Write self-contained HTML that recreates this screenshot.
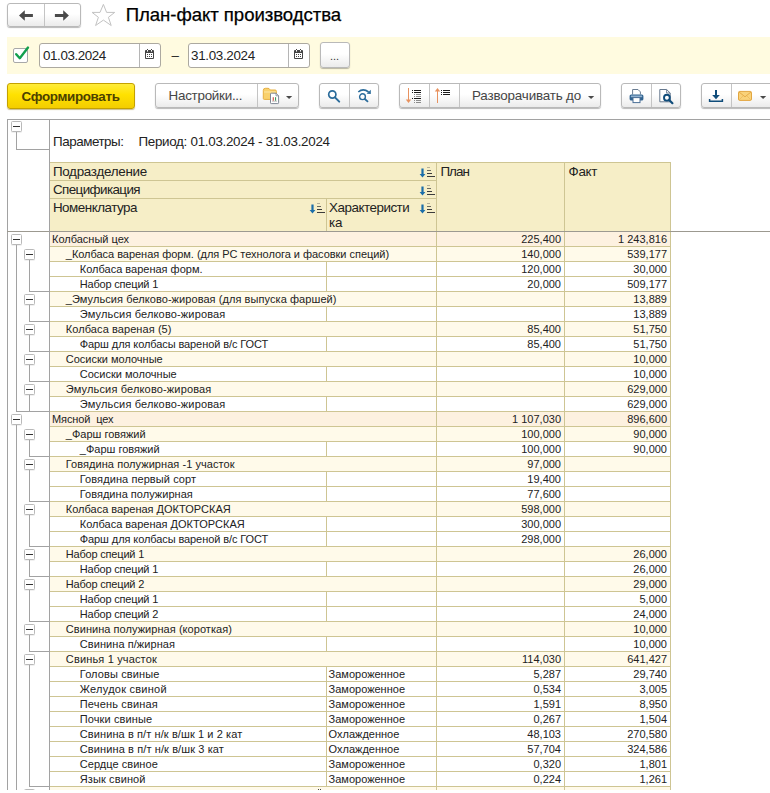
<!DOCTYPE html>
<html lang="ru"><head><meta charset="utf-8"><title>План-факт производства</title>
<style>
*{box-sizing:border-box;margin:0;padding:0}
html,body{width:770px;height:793px;overflow:hidden;background:#fff}
body{position:relative;font-family:"Liberation Sans",sans-serif;font-size:13px;color:#333}
.abs,.abs *{position:absolute}
.a{position:absolute}
.btn{position:absolute;border:1px solid #b9b9b9;border-radius:3px;background:linear-gradient(#ffffff 0%,#ffffff 45%,#ebebeb 100%);box-shadow:0 1px 1px rgba(0,0,0,.28)}
.sep{position:absolute;top:0;bottom:0;width:1px;background:#c4c4c4}
.inp{position:absolute;border:1px solid #aca9a0;border-radius:3px;background:#fff}
.t{position:absolute;white-space:pre;line-height:1}
.row{position:absolute;left:50px;width:621px;height:15px;font-size:11px;color:#222}
.row .c{position:absolute;top:0;height:16px;border-top:1px solid #cec593;border-bottom:1px solid #cec593;border-right:1px solid #cec593;white-space:pre;line-height:13px;padding-top:1px;overflow:hidden}
.l1 .c{background:#fdf1e0}
.l2 .c{background:#fffaea}
.l3 .c{background:#fff}
.num{text-align:right;padding-right:3px}
.box{position:absolute;width:11px;height:11px;border:1px solid #b9b9b9;border-radius:1.5px;background:#fff;box-shadow:0 1px 0 rgba(0,0,0,.06)}
.box i{position:absolute;left:1px;top:4px;width:7px;height:1px;background:#333}
.ln{position:absolute;background:#a2a2a2}
.hd{position:absolute;background:#f6eec7;border:1px solid #cec593;font-size:13px;color:#222;white-space:pre;line-height:15px;overflow:hidden}
</style></head><body>

<!-- navigation -->
<div class="btn" style="left:7px;top:3px;width:74px;height:24px"><div class="sep" style="left:36px"></div>
<svg class="a" style="left:0;top:0" width="72" height="22" viewBox="0 0 72 22"><g fill="#4a4a4a"><path d="M11 11.5 L16.8 6.2 L16.8 10 L24.9 10 L24.9 13 L16.8 13 L16.8 16.8 Z"/><path d="M60.9 11.5 L55.2 6.2 L55.2 10 L46.9 10 L46.9 13 L55.2 13 L55.2 16.8 Z"/></g></svg></div>
<svg class="a" style="left:91px;top:3px" width="25" height="25" viewBox="0 0 25 25"><path d="M12.4 1.4 L15.6 9.4 L23.7 9.4 L17.4 14.3 L20.2 22.5 L12.4 17.1 L4.6 22.5 L7.4 14.3 L1.1 9.4 L9 9.4 Z" fill="#fff" stroke="#c2c2c2" stroke-width="1"/></svg>
<div class="t" style="left:125.70px;top:5.86px;font-size:18.6px;letter-spacing:-0.052px;color:#000;-webkit-text-stroke:0.25px #000;">План-факт производства</div>


<!-- period band -->
<div class="a" style="left:7px;top:37px;width:763px;height:37px;background:#fffbe0"></div>
<div class="a" style="left:13px;top:48px;width:15px;height:15px;border:1px solid #a8a8a8;border-radius:2px;background:#fff"></div>
<svg class="a" style="left:13px;top:45px" width="18" height="18" viewBox="0 0 18 18"><path d="M3.2 9.2 L6.8 13.2 L15 2.6" fill="none" stroke="#12a04e" stroke-width="2.4" stroke-linecap="round" stroke-linejoin="round"/></svg>
<div class="inp" style="left:39px;top:43px;width:122px;height:25px"><div class="sep" style="left:99px;background:#b5b5b5"></div></div>
<div class="t" style="left:43.10px;top:48.66px;font-size:13.4px;letter-spacing:-0.444px;color:#222;">01.03.2024</div>

<div class="t" style="left:171.50px;top:48.66px;font-size:13.4px;letter-spacing:0.000px;color:#222;">–</div>

<div class="inp" style="left:188px;top:43px;width:122px;height:25px"><div class="sep" style="left:99px;background:#b5b5b5"></div></div>
<div class="t" style="left:191.10px;top:48.66px;font-size:13.4px;letter-spacing:-0.333px;color:#222;">31.03.2024</div>

<div class="btn" style="left:320px;top:42px;width:30px;height:26px"></div>
<div class="t" style="left:330px;top:50.7px;font-size:11px;color:#333;letter-spacing:0px">...</div>
<svg class="a" style="left:145px;top:49px" width="9" height="10" viewBox="0 0 9 10"><rect x="0" y="1" width="9" height="9" rx="1" fill="#454545"/><rect x="2" y="0" width="1" height="1" fill="#454545"/><rect x="6" y="0" width="1" height="1" fill="#454545"/><rect x="2" y="1" width="1" height="1.6" fill="#fff"/><rect x="6" y="1" width="1" height="1.6" fill="#fff"/><rect x="1" y="4" width="7" height="5" fill="#fff"/><g fill="#454545"><rect x="2" y="5" width="1" height="1"/><rect x="4" y="5" width="1" height="1"/><rect x="6" y="5" width="1" height="1"/><rect x="2" y="7" width="1" height="1"/><rect x="4" y="7" width="1" height="1"/><rect x="6" y="7" width="1" height="1"/></g></svg><svg class="a" style="left:294px;top:49px" width="9" height="10" viewBox="0 0 9 10"><rect x="0" y="1" width="9" height="9" rx="1" fill="#454545"/><rect x="2" y="0" width="1" height="1" fill="#454545"/><rect x="6" y="0" width="1" height="1" fill="#454545"/><rect x="2" y="1" width="1" height="1.6" fill="#fff"/><rect x="6" y="1" width="1" height="1.6" fill="#fff"/><rect x="1" y="4" width="7" height="5" fill="#fff"/><g fill="#454545"><rect x="2" y="5" width="1" height="1"/><rect x="4" y="5" width="1" height="1"/><rect x="6" y="5" width="1" height="1"/><rect x="2" y="7" width="1" height="1"/><rect x="4" y="7" width="1" height="1"/><rect x="6" y="7" width="1" height="1"/></g></svg>
<div class="a" style="left:7px;top:83px;width:128px;height:26px;border:1px solid #c4a100;border-radius:3px;background:linear-gradient(#ffec3a 0%,#ffe100 45%,#f3cd00 100%);box-shadow:0 1px 1px rgba(140,110,0,.45)"></div>
<div class="t" style="left:21.50px;top:89.66px;font-size:13.4px;letter-spacing:-0.327px;color:#4c4100;font-weight:bold;">Сформировать</div>

<div class="btn" style="left:155px;top:83px;width:144px;height:25px"><div class="sep" style="left:101px"></div></div>
<div class="t" style="left:168.60px;top:89.46px;font-size:13.4px;letter-spacing:-0.264px;color:#454545;">Настройки...</div>

<div class="btn" style="left:319px;top:83px;width:60px;height:25px"><div class="sep" style="left:29px"></div></div>
<div class="btn" style="left:399px;top:83px;width:202px;height:25px"><div class="sep" style="left:29px"></div><div class="sep" style="left:59px"></div></div>
<div class="t" style="left:472.00px;top:89.46px;font-size:13.4px;letter-spacing:-0.160px;color:#454545;">Разворачивать до</div>

<div class="btn" style="left:621px;top:83px;width:60px;height:25px"><div class="sep" style="left:29px"></div></div>
<div class="btn" style="left:701px;top:83px;width:80px;height:25px"><div class="sep" style="left:29px"></div></div>
<svg class="a" style="left:286px;top:96px" width="7" height="4" viewBox="0 0 7 4"><path d="M0 0 H6.2 L3.1 3.1 Z" fill="#4a4a4a"/></svg><svg class="a" style="left:588px;top:96px" width="7" height="4" viewBox="0 0 7 4"><path d="M0 0 H6.2 L3.1 3.1 Z" fill="#4a4a4a"/></svg><svg class="a" style="left:760px;top:96px" width="7" height="4" viewBox="0 0 7 4"><path d="M0 0 H6.2 L3.1 3.1 Z" fill="#4a4a4a"/></svg><!-- folder + report icon -->
<svg class="a" style="left:262px;top:87px" width="18" height="18" viewBox="0 0 18 18">
<path d="M1.3 3.4 Q1.3 1.3 3.4 1.3 H6 Q7.2 1.3 7.8 2.4 L8.3 3 H13.2 Q14.4 3 14.4 4.4 V11.4 Q14.4 12.4 13.4 12.4 H2.3 Q1.3 12.4 1.3 11.4 Z" fill="#f9d16c" stroke="#e6b043" stroke-width="1"/>
<path d="M2 5 H13.8" stroke="#fce6a6" stroke-width="1" fill="none"/>
<path d="M8.5 7 Q8.5 6.2 9.3 6.2 H14 L16.6 8.8 V15.8 Q16.6 16.6 15.8 16.6 H9.3 Q8.5 16.6 8.5 15.8 Z" fill="#fff" stroke="#7f8896" stroke-width="1"/>
<path d="M14 6.2 V8.8 H16.6" fill="none" stroke="#7f8896" stroke-width="0.8"/>
<rect x="10.7" y="10.2" width="1.1" height="3.6" fill="#d04a3a"/><rect x="13" y="10.2" width="1.1" height="3.6" fill="#3f9a5a"/>
<rect x="10" y="13.8" width="5" height="0.7" fill="#aaa"/>
</svg>
<!-- search -->
<svg class="a" style="left:326px;top:88px" width="16" height="16" viewBox="0 0 16 16"><circle cx="6.3" cy="6.5" r="3.6" fill="none" stroke="#2b6c9b" stroke-width="1.7"/><path d="M9 9.4 L13.2 13.6" stroke="#2b6c9b" stroke-width="2" stroke-linecap="round"/></svg>
<!-- search next -->
<svg class="a" style="left:356px;top:87px" width="17" height="17" viewBox="0 0 17 17"><circle cx="6.5" cy="9.7" r="2.9" fill="none" stroke="#2b6c9b" stroke-width="1.4"/><path d="M8.8 12 L11.5 14.4" stroke="#2b6c9b" stroke-width="1.8" stroke-linecap="round"/><path d="M2.3 5 Q7 0.6 12.6 5" fill="none" stroke="#2b6c9b" stroke-width="1.6"/><path d="M14.8 2.8 L14.8 6.9 L10.6 6.7 Z" fill="#2b6c9b"/></svg>
<!-- collapse / expand groups -->
<svg class="a" style="left:405px;top:87px" width="18" height="18" viewBox="0 0 18 18" shape-rendering="crispEdges">
<rect x="3" y="1" width="1" height="13" fill="#e8925f"/><path d="M0.8 12.4 H6.2 L3.5 16 Z" fill="#e8925f" shape-rendering="auto"/>
<g fill="#1a1a1a"><rect x="7" y="3" width="1" height="1"/><rect x="9" y="3" width="7" height="1"/><rect x="7" y="5" width="1" height="1"/><rect x="9" y="5" width="7" height="1"/><rect x="7" y="11" width="1" height="1"/><rect x="9" y="11" width="7" height="1"/></g>
<g fill="#8c8c8c"><rect x="9" y="7" width="1" height="1"/><rect x="11" y="7" width="5" height="1"/><rect x="9" y="9" width="1" height="1"/><rect x="11" y="9" width="5" height="1"/><rect x="9" y="13" width="1" height="1"/><rect x="11" y="13" width="5" height="1"/><rect x="9" y="15" width="1" height="1"/><rect x="11" y="15" width="5" height="1"/></g>
</svg>
<svg class="a" style="left:434px;top:87px" width="18" height="18" viewBox="0 0 18 18" shape-rendering="crispEdges">
<rect x="3" y="3" width="1" height="13" fill="#e8925f"/><path d="M0.8 4.6 H6.2 L3.5 1 Z" fill="#e8925f" shape-rendering="auto"/>
<g fill="#1a1a1a"><rect x="7" y="3" width="1" height="1"/><rect x="9" y="3" width="7" height="1"/><rect x="7" y="5" width="1" height="1"/><rect x="9" y="5" width="7" height="1"/><rect x="7" y="7" width="1" height="1"/><rect x="9" y="7" width="7" height="1"/></g>
</svg>
<!-- print -->
<svg class="a" style="left:629px;top:88px" width="16" height="16" viewBox="0 0 16 16">
<path d="M3.6 6.5 V1.5 H9 L11.4 3.9 V6.5" fill="#fff" stroke="#6a7d92" stroke-width="1"/>
<rect x="0.6" y="6.5" width="13.8" height="6" rx="1.6" fill="#2f628f"/>
<rect x="1.8" y="7.6" width="11.4" height="1.6" rx="0.6" fill="#90b1d0"/>
<rect x="4" y="9.6" width="7" height="5" fill="#fff" stroke="#4b6f96" stroke-width="1"/>
</svg>
<!-- preview -->
<svg class="a" style="left:658px;top:88px" width="17" height="17" viewBox="0 0 17 17">
<path d="M1.8 1.5 H8.6 L12.2 5 V13.8 H1.8 Z" fill="#fff" stroke="#66788e" stroke-width="1"/>
<path d="M8.6 1.5 V5 H12.2" fill="none" stroke="#66788e" stroke-width="0.9"/>
<circle cx="8.9" cy="9.7" r="2.9" fill="#fff" stroke="#0f4c7a" stroke-width="1.9"/>
<path d="M11.2 12 L14.4 15.2" stroke="#0f4c7a" stroke-width="2.2" stroke-linecap="round"/>
</svg>
<!-- save -->
<svg class="a" style="left:708px;top:89px" width="16" height="14" viewBox="0 0 16 14">
<rect x="7" y="1" width="2" height="6" fill="#0f4c7a"/><path d="M4.2 6 H11.8 L8 10.2 Z" fill="#0f4c7a"/>
<path d="M1.6 10 V12.2 H14.4 V10" fill="none" stroke="#0f4c7a" stroke-width="1.5"/>
</svg>
<!-- mail -->
<svg class="a" style="left:737px;top:90px" width="16" height="12" viewBox="0 0 16 12">
<rect x="1.5" y="1.4" width="13" height="9" rx="1.2" fill="#f9d27a" stroke="#e2a640" stroke-width="1"/>
<path d="M2 2 L8 6.8 L14 2" fill="none" stroke="#e2a640" stroke-width="0.9"/>
<path d="M2 10 L6.2 5.8 M14 10 L9.8 5.8" fill="none" stroke="#ecba5c" stroke-width="0.8"/>
</svg>

<div class="ln" style="left:7px;top:119px;width:763px;height:1px"></div>
<div class="ln" style="left:7px;top:119px;width:1px;height:671px"></div>
<div class="ln" style="left:49px;top:119px;width:1px;height:671px;z-index:3"></div>
<div class="box" style="left:11px;top:121px"><i></i></div>
<div class="ln" style="left:16px;top:132px;width:1px;height:18px"></div>
<div class="ln" style="left:16px;top:149px;width:33px;height:1px"></div>
<div class="t" style="left:53.10px;top:135.16px;font-size:13.4px;letter-spacing:-0.478px;color:#222;">Параметры:</div>

<div class="t" style="left:138.40px;top:135.16px;font-size:13.4px;letter-spacing:-0.290px;color:#222;">Период: 01.03.2024 - 31.03.2024</div>


<div class="hd" style="left:49px;top:162px;width:388px;height:19px"></div>
<div class="hd" style="left:49px;top:180px;width:388px;height:19px"></div>
<div class="hd" style="left:49px;top:198px;width:278px;height:34px"></div>
<div class="hd" style="left:326px;top:198px;width:111px;height:34px"></div>
<div class="hd" style="left:436px;top:162px;width:129px;height:70px"></div>
<div class="hd" style="left:564px;top:162px;width:107px;height:70px"></div><div class="t" style="left:52.90px;top:164.66px;font-size:13.4px;letter-spacing:-0.275px;color:#222;">Подразделение</div>
<div class="t" style="left:52.90px;top:182.66px;font-size:13.4px;letter-spacing:-0.573px;color:#222;">Спецификация</div>
<div class="t" style="left:52.90px;top:200.66px;font-size:13.4px;letter-spacing:-0.482px;color:#222;">Номенклатура</div>
<div class="t" style="left:329.00px;top:200.66px;font-size:13.4px;letter-spacing:-0.473px;color:#222;">Характеристи</div>
<div class="t" style="left:329.00px;top:215.66px;font-size:13.4px;letter-spacing:-0.100px;color:#222;">ка</div>
<div class="t" style="left:440.40px;top:164.86px;font-size:13.4px;letter-spacing:-0.900px;color:#222;">План</div>
<div class="t" style="left:568.50px;top:164.86px;font-size:13.4px;letter-spacing:-0.300px;color:#222;">Факт</div>

<svg class="a" style="left:419px;top:167px" width="17" height="11" viewBox="0 0 17 11"><path d="M2.4 1.4 H4.6 V6.9 H6.4 L3.5 10.4 L0.6 6.9 H2.4 Z" fill="#1c6ea9"/><g fill="#3c3c3c"><rect x="8" y="0" width="3" height="1" fill="#b5b09a"/><rect x="8" y="3" width="4" height="1" fill="#6a6a60"/><rect x="8" y="6" width="5" height="1"/><rect x="8" y="9" width="8" height="1"/></g></svg><svg class="a" style="left:419px;top:185px" width="17" height="11" viewBox="0 0 17 11"><path d="M2.4 1.4 H4.6 V6.9 H6.4 L3.5 10.4 L0.6 6.9 H2.4 Z" fill="#1c6ea9"/><g fill="#3c3c3c"><rect x="8" y="0" width="3" height="1" fill="#b5b09a"/><rect x="8" y="3" width="4" height="1" fill="#6a6a60"/><rect x="8" y="6" width="5" height="1"/><rect x="8" y="9" width="8" height="1"/></g></svg><svg class="a" style="left:419px;top:203px" width="17" height="11" viewBox="0 0 17 11"><path d="M2.4 1.4 H4.6 V6.9 H6.4 L3.5 10.4 L0.6 6.9 H2.4 Z" fill="#1c6ea9"/><g fill="#3c3c3c"><rect x="8" y="0" width="3" height="1" fill="#b5b09a"/><rect x="8" y="3" width="4" height="1" fill="#6a6a60"/><rect x="8" y="6" width="5" height="1"/><rect x="8" y="9" width="8" height="1"/></g></svg><svg class="a" style="left:309px;top:203px" width="17" height="11" viewBox="0 0 17 11"><path d="M2.4 1.4 H4.6 V6.9 H6.4 L3.5 10.4 L0.6 6.9 H2.4 Z" fill="#1c6ea9"/><g fill="#3c3c3c"><rect x="8" y="0" width="3" height="1" fill="#b5b09a"/><rect x="8" y="3" width="4" height="1" fill="#6a6a60"/><rect x="8" y="6" width="5" height="1"/><rect x="8" y="9" width="8" height="1"/></g></svg><div class="row l1" style="top:231px"><div class="c" style="left:0;width:387px;padding-left:2px">Колбасный цех</div><div class="c num" style="left:387px;width:128px">225,400</div><div class="c num" style="left:515px;width:106px">1 243,816</div></div>
<div class="row l2" style="top:246px"><div class="c" style="left:0;width:387px;padding-left:15.8px"><span style="letter-spacing:-0.034px">_Колбаса вареная форм. (для РС технолога и фасовки специй)</span></div><div class="c num" style="left:387px;width:128px">140,000</div><div class="c num" style="left:515px;width:106px">539,177</div></div>
<div class="row l3" style="top:261px"><div class="c" style="left:0;width:277px;padding-left:29.8px">Колбаса вареная форм.</div><div class="c" style="left:277px;width:110px;padding-left:1.6px"></div><div class="c num" style="left:387px;width:128px">120,000</div><div class="c num" style="left:515px;width:106px">30,000</div></div>
<div class="row l3" style="top:276px"><div class="c" style="left:0;width:277px;padding-left:29.8px"><span style="letter-spacing:-0.193px">Набор специй 1</span></div><div class="c" style="left:277px;width:110px;padding-left:1.6px"></div><div class="c num" style="left:387px;width:128px">20,000</div><div class="c num" style="left:515px;width:106px">509,177</div></div>
<div class="row l2" style="top:291px"><div class="c" style="left:0;width:387px;padding-left:15.8px"><span style="letter-spacing:0.070px">_Эмульсия белково-жировая (для выпуска фаршей)</span></div><div class="c num" style="left:387px;width:128px"></div><div class="c num" style="left:515px;width:106px">13,889</div></div>
<div class="row l3" style="top:306px"><div class="c" style="left:0;width:277px;padding-left:29.8px"><span style="letter-spacing:0.154px">Эмульсия белково-жировая</span></div><div class="c" style="left:277px;width:110px;padding-left:1.6px"></div><div class="c num" style="left:387px;width:128px"></div><div class="c num" style="left:515px;width:106px">13,889</div></div>
<div class="row l2" style="top:321px"><div class="c" style="left:0;width:387px;padding-left:15.8px"><span style="letter-spacing:0.079px">Колбаса вареная (5)</span></div><div class="c num" style="left:387px;width:128px">85,400</div><div class="c num" style="left:515px;width:106px">51,750</div></div>
<div class="row l3" style="top:336px"><div class="c" style="left:0;width:277px;padding-left:29.8px"><span style="letter-spacing:-0.091px">Фарш для колбасы вареной в/с ГОСТ</span></div><div class="c" style="left:277px;width:110px;padding-left:1.6px"></div><div class="c num" style="left:387px;width:128px">85,400</div><div class="c num" style="left:515px;width:106px">51,750</div></div>
<div class="row l2" style="top:351px"><div class="c" style="left:0;width:387px;padding-left:15.8px">Сосиски молочные</div><div class="c num" style="left:387px;width:128px"></div><div class="c num" style="left:515px;width:106px">10,000</div></div>
<div class="row l3" style="top:366px"><div class="c" style="left:0;width:277px;padding-left:29.8px">Сосиски молочные</div><div class="c" style="left:277px;width:110px;padding-left:1.6px"></div><div class="c num" style="left:387px;width:128px"></div><div class="c num" style="left:515px;width:106px">10,000</div></div>
<div class="row l2" style="top:381px"><div class="c" style="left:0;width:387px;padding-left:15.8px"><span style="letter-spacing:0.154px">Эмульсия белково-жировая</span></div><div class="c num" style="left:387px;width:128px"></div><div class="c num" style="left:515px;width:106px">629,000</div></div>
<div class="row l3" style="top:396px"><div class="c" style="left:0;width:277px;padding-left:29.8px"><span style="letter-spacing:0.154px">Эмульсия белково-жировая</span></div><div class="c" style="left:277px;width:110px;padding-left:1.6px"></div><div class="c num" style="left:387px;width:128px"></div><div class="c num" style="left:515px;width:106px">629,000</div></div>
<div class="row l1" style="top:411px"><div class="c" style="left:0;width:387px;padding-left:2px"><span style="letter-spacing:-0.114px">Мясной  цех</span></div><div class="c num" style="left:387px;width:128px">1 107,030</div><div class="c num" style="left:515px;width:106px">896,600</div></div>
<div class="row l2" style="top:426px"><div class="c" style="left:0;width:387px;padding-left:15.8px">_Фарш говяжий</div><div class="c num" style="left:387px;width:128px">100,000</div><div class="c num" style="left:515px;width:106px">90,000</div></div>
<div class="row l3" style="top:441px"><div class="c" style="left:0;width:277px;padding-left:29.8px">_Фарш говяжий</div><div class="c" style="left:277px;width:110px;padding-left:1.6px"></div><div class="c num" style="left:387px;width:128px">100,000</div><div class="c num" style="left:515px;width:106px">90,000</div></div>
<div class="row l2" style="top:456px"><div class="c" style="left:0;width:387px;padding-left:15.8px"><span style="letter-spacing:0.058px">Говядина полужирная -1 участок</span></div><div class="c num" style="left:387px;width:128px">97,000</div><div class="c num" style="left:515px;width:106px"></div></div>
<div class="row l3" style="top:471px"><div class="c" style="left:0;width:277px;padding-left:29.8px"><span style="letter-spacing:0.087px">Говядина первый сорт</span></div><div class="c" style="left:277px;width:110px;padding-left:1.6px"></div><div class="c num" style="left:387px;width:128px">19,400</div><div class="c num" style="left:515px;width:106px"></div></div>
<div class="row l3" style="top:486px"><div class="c" style="left:0;width:277px;padding-left:29.8px"><span style="letter-spacing:0.026px">Говядина полужирная</span></div><div class="c" style="left:277px;width:110px;padding-left:1.6px"></div><div class="c num" style="left:387px;width:128px">77,600</div><div class="c num" style="left:515px;width:106px"></div></div>
<div class="row l2" style="top:501px"><div class="c" style="left:0;width:387px;padding-left:15.8px">Колбаса вареная ДОКТОРСКАЯ</div><div class="c num" style="left:387px;width:128px">598,000</div><div class="c num" style="left:515px;width:106px"></div></div>
<div class="row l3" style="top:516px"><div class="c" style="left:0;width:277px;padding-left:29.8px">Колбаса вареная ДОКТОРСКАЯ</div><div class="c" style="left:277px;width:110px;padding-left:1.6px"></div><div class="c num" style="left:387px;width:128px">300,000</div><div class="c num" style="left:515px;width:106px"></div></div>
<div class="row l3" style="top:531px"><div class="c" style="left:0;width:277px;padding-left:29.8px"><span style="letter-spacing:-0.091px">Фарш для колбасы вареной в/с ГОСТ</span></div><div class="c" style="left:277px;width:110px;padding-left:1.6px"></div><div class="c num" style="left:387px;width:128px">298,000</div><div class="c num" style="left:515px;width:106px"></div></div>
<div class="row l2" style="top:546px"><div class="c" style="left:0;width:387px;padding-left:15.8px"><span style="letter-spacing:-0.193px">Набор специй 1</span></div><div class="c num" style="left:387px;width:128px"></div><div class="c num" style="left:515px;width:106px">26,000</div></div>
<div class="row l3" style="top:561px"><div class="c" style="left:0;width:277px;padding-left:29.8px"><span style="letter-spacing:-0.193px">Набор специй 1</span></div><div class="c" style="left:277px;width:110px;padding-left:1.6px"></div><div class="c num" style="left:387px;width:128px"></div><div class="c num" style="left:515px;width:106px">26,000</div></div>
<div class="row l2" style="top:576px"><div class="c" style="left:0;width:387px;padding-left:15.8px"><span style="letter-spacing:-0.193px">Набор специй 2</span></div><div class="c num" style="left:387px;width:128px"></div><div class="c num" style="left:515px;width:106px">29,000</div></div>
<div class="row l3" style="top:591px"><div class="c" style="left:0;width:277px;padding-left:29.8px"><span style="letter-spacing:-0.193px">Набор специй 1</span></div><div class="c" style="left:277px;width:110px;padding-left:1.6px"></div><div class="c num" style="left:387px;width:128px"></div><div class="c num" style="left:515px;width:106px">5,000</div></div>
<div class="row l3" style="top:606px"><div class="c" style="left:0;width:277px;padding-left:29.8px"><span style="letter-spacing:-0.193px">Набор специй 2</span></div><div class="c" style="left:277px;width:110px;padding-left:1.6px"></div><div class="c num" style="left:387px;width:128px"></div><div class="c num" style="left:515px;width:106px">24,000</div></div>
<div class="row l2" style="top:621px"><div class="c" style="left:0;width:387px;padding-left:15.8px"><span style="letter-spacing:0.052px">Свинина полужирная (короткая)</span></div><div class="c num" style="left:387px;width:128px"></div><div class="c num" style="left:515px;width:106px">10,000</div></div>
<div class="row l3" style="top:636px"><div class="c" style="left:0;width:277px;padding-left:29.8px"><span style="letter-spacing:0.062px">Свинина п/жирная</span></div><div class="c" style="left:277px;width:110px;padding-left:1.6px"></div><div class="c num" style="left:387px;width:128px"></div><div class="c num" style="left:515px;width:106px">10,000</div></div>
<div class="row l2" style="top:651px"><div class="c" style="left:0;width:387px;padding-left:15.8px"><span style="letter-spacing:0.156px">Свинья 1 участок</span></div><div class="c num" style="left:387px;width:128px">114,030</div><div class="c num" style="left:515px;width:106px">641,427</div></div>
<div class="row l3" style="top:666px"><div class="c" style="left:0;width:277px;padding-left:29.8px"><span style="letter-spacing:0.115px">Головы свиные</span></div><div class="c" style="left:277px;width:110px;padding-left:1.6px">Замороженное</div><div class="c num" style="left:387px;width:128px">5,287</div><div class="c num" style="left:515px;width:106px">29,740</div></div>
<div class="row l3" style="top:681px"><div class="c" style="left:0;width:277px;padding-left:29.8px"><span style="letter-spacing:0.250px">Желудок свиной</span></div><div class="c" style="left:277px;width:110px;padding-left:1.6px">Замороженное</div><div class="c num" style="left:387px;width:128px">0,534</div><div class="c num" style="left:515px;width:106px">3,005</div></div>
<div class="row l3" style="top:696px"><div class="c" style="left:0;width:277px;padding-left:29.8px"><span style="letter-spacing:0.169px">Печень свиная</span></div><div class="c" style="left:277px;width:110px;padding-left:1.6px">Замороженное</div><div class="c num" style="left:387px;width:128px">1,591</div><div class="c num" style="left:515px;width:106px">8,950</div></div>
<div class="row l3" style="top:711px"><div class="c" style="left:0;width:277px;padding-left:29.8px"><span style="letter-spacing:0.100px">Почки свиные</span></div><div class="c" style="left:277px;width:110px;padding-left:1.6px">Замороженное</div><div class="c num" style="left:387px;width:128px">0,267</div><div class="c num" style="left:515px;width:106px">1,504</div></div>
<div class="row l3" style="top:726px"><div class="c" style="left:0;width:277px;padding-left:29.8px"><span style="letter-spacing:0.094px">Свинина в п/т н/к в/шк 1 и 2 кат</span></div><div class="c" style="left:277px;width:110px;padding-left:1.6px">Охлажденное</div><div class="c num" style="left:387px;width:128px">48,103</div><div class="c num" style="left:515px;width:106px">270,580</div></div>
<div class="row l3" style="top:741px"><div class="c" style="left:0;width:277px;padding-left:29.8px"><span style="letter-spacing:0.107px">Свинина в п/т н/к в/шк 3 кат</span></div><div class="c" style="left:277px;width:110px;padding-left:1.6px">Охлажденное</div><div class="c num" style="left:387px;width:128px">57,704</div><div class="c num" style="left:515px;width:106px">324,586</div></div>
<div class="row l3" style="top:756px"><div class="c" style="left:0;width:277px;padding-left:29.8px"><span style="letter-spacing:0.038px">Сердце свиное</span></div><div class="c" style="left:277px;width:110px;padding-left:1.6px">Замороженное</div><div class="c num" style="left:387px;width:128px">0,320</div><div class="c num" style="left:515px;width:106px">1,801</div></div>
<div class="row l3" style="top:771px"><div class="c" style="left:0;width:277px;padding-left:29.8px"><span style="letter-spacing:0.109px">Язык свиной</span></div><div class="c" style="left:277px;width:110px;padding-left:1.6px">Замороженное</div><div class="c num" style="left:387px;width:128px">0,224</div><div class="c num" style="left:515px;width:106px">1,261</div></div>
<div class="row l2" style="top:786px"><div class="c" style="left:0;width:387px"></div><div class="c" style="left:387px;width:128px"></div><div class="c" style="left:515px;width:106px"></div></div>
<div class="a" style="left:318px;top:789px;width:1px;height:1px;background:#444"></div><div class="a" style="left:320px;top:789px;width:1px;height:1px;background:#444"></div>
<div class="ln" style="left:7px;top:231px;width:763px;height:1px;background:#9c9990"></div>
<div class="box" style="left:11px;top:234px"><i></i></div><div class="ln" style="left:16px;top:245px;width:1px;height:167px"></div><div class="ln" style="left:16px;top:411px;width:33px;height:1px"></div><div class="box" style="left:11px;top:414px"><i></i></div><div class="ln" style="left:16px;top:425px;width:1px;height:365px"></div><div class="box" style="left:24px;top:249px"><i></i></div><div class="ln" style="left:29px;top:260px;width:1px;height:32px"></div><div class="ln" style="left:29px;top:291px;width:20px;height:1px"></div><div class="box" style="left:24px;top:294px"><i></i></div><div class="ln" style="left:29px;top:305px;width:1px;height:17px"></div><div class="ln" style="left:29px;top:321px;width:20px;height:1px"></div><div class="box" style="left:24px;top:324px"><i></i></div><div class="ln" style="left:29px;top:335px;width:1px;height:17px"></div><div class="ln" style="left:29px;top:351px;width:20px;height:1px"></div><div class="box" style="left:24px;top:354px"><i></i></div><div class="ln" style="left:29px;top:365px;width:1px;height:17px"></div><div class="ln" style="left:29px;top:381px;width:20px;height:1px"></div><div class="box" style="left:24px;top:384px"><i></i></div><div class="ln" style="left:29px;top:395px;width:1px;height:17px"></div><div class="ln" style="left:29px;top:411px;width:20px;height:1px"></div><div class="box" style="left:24px;top:429px"><i></i></div><div class="ln" style="left:29px;top:440px;width:1px;height:17px"></div><div class="ln" style="left:29px;top:456px;width:20px;height:1px"></div><div class="box" style="left:24px;top:459px"><i></i></div><div class="ln" style="left:29px;top:470px;width:1px;height:32px"></div><div class="ln" style="left:29px;top:501px;width:20px;height:1px"></div><div class="box" style="left:24px;top:504px"><i></i></div><div class="ln" style="left:29px;top:515px;width:1px;height:32px"></div><div class="ln" style="left:29px;top:546px;width:20px;height:1px"></div><div class="box" style="left:24px;top:549px"><i></i></div><div class="ln" style="left:29px;top:560px;width:1px;height:17px"></div><div class="ln" style="left:29px;top:576px;width:20px;height:1px"></div><div class="box" style="left:24px;top:579px"><i></i></div><div class="ln" style="left:29px;top:590px;width:1px;height:32px"></div><div class="ln" style="left:29px;top:621px;width:20px;height:1px"></div><div class="box" style="left:24px;top:624px"><i></i></div><div class="ln" style="left:29px;top:635px;width:1px;height:17px"></div><div class="ln" style="left:29px;top:651px;width:20px;height:1px"></div><div class="box" style="left:24px;top:654px"><i></i></div><div class="ln" style="left:29px;top:665px;width:1px;height:122px"></div><div class="ln" style="left:29px;top:786px;width:20px;height:1px"></div><div class="box" style="left:24px;top:789px"><i></i></div><div class="a" style="left:0;top:790px;width:770px;height:3px;background:#fff"></div>
</body></html>
